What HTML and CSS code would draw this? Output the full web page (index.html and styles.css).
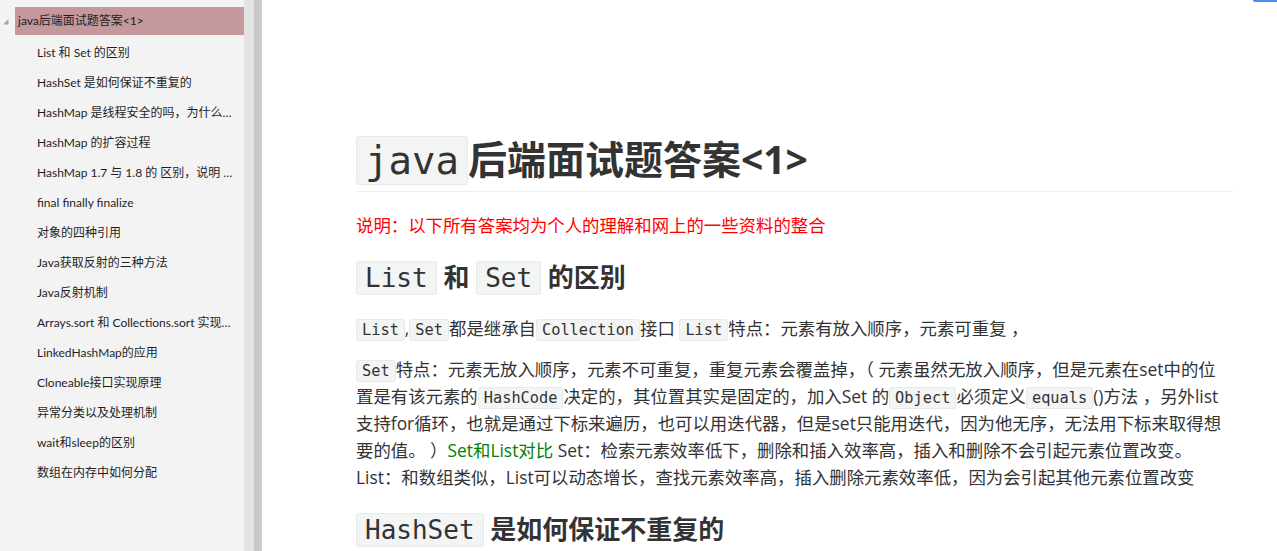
FILE: index.html
```html
<!DOCTYPE html>
<html lang="zh-CN">
<head>
    <meta charset="UTF-8">
    <meta name="viewport" content="width=device-width, initial-scale=1.0">
    <title>java后端面试题答案&lt;1&gt;</title>
    <link rel="stylesheet" href="styles.css">
</head>
<body>
    <div class="sidebar">
        <div class="toc-top">
            <svg class="toc-arrow" width="6" height="6" viewBox="0 0 6 6"><polygon points="5.5,0 5.5,5.5 0,5.5" fill="#a8a8a8"/></svg>
            <div class="toc-current">java后端面试题答案&lt;1&gt;</div>
        </div>
        <ul class="toc-list">
            <li>List 和 Set 的区别</li>
            <li>HashSet 是如何保证不重复的</li>
            <li>HashMap 是线程安全的吗，为什么不是线程安全的</li>
            <li>HashMap 的扩容过程</li>
            <li>HashMap 1.7 与 1.8 的 区别，说明 1.8 做了哪些优化</li>
            <li>final finally finalize</li>
            <li>对象的四种引用</li>
            <li>Java获取反射的三种方法</li>
            <li>Java反射机制</li>
            <li>Arrays.sort 和 Collections.sort 实现原理和区别</li>
            <li>LinkedHashMap的应用</li>
            <li>Cloneable接口实现原理</li>
            <li>异常分类以及处理机制</li>
            <li>wait和sleep的区别</li>
            <li>数组在内存中如何分配</li>
        </ul>
    </div>
    <div class="splitter"></div>
    <div class="content">
        <div class="write">
            <h1><code>java</code>后端面试题答案&lt;1&gt;</h1>
            <p class="note">说明：以下所有答案均为个人的理解和网上的一些资料的整合</p>
            <h2><code>List</code> 和 <code>Set</code> 的区别</h2>
            <p><code>List</code>,<code>Set</code>都是继承自<code>Collection</code>接口 <code>List</code>特点：元素有放入顺序，元素可重复 ，</p>
            <p><code>Set</code>特点：元素无放入顺序，元素不可重复，重复元素会覆盖掉，（ 元素虽然无放入顺序，但是元素在set中的位置是有该元素的<code>HashCode</code>决定的，其位置其实是固定的，加入Set 的<code>Object</code>必须定义<code>equals</code>()方法 ，另外list支持for循环，也就是通过下标来遍历，也可以用迭代器，但是set只能用迭代，因为他无序，无法用下标来取得想要的值。 ）<span class="green">Set和List对比</span> Set：检索元素效率低下，删除和插入效率高，插入和删除不会引起元素位置改变。<br>List：和数组类似，List可以动态增长，查找元素效率高，插入删除元素效率低，因为会引起其他元素位置改变</p>
            <h2><code>HashSet</code> 是如何保证不重复的</h2>
        </div>
    </div>
    <div class="topbar"></div>
</body>
</html>
```

FILE: styles.css
```css
*{
    margin: 0;
    padding: 0;
    box-sizing: border-box;
}
body{
    display: flex;
    height: 551px;
    overflow: hidden;
    background: #fff;
    color: #333;
    font-family: "Open Sans", "Noto Sans CJK SC", sans-serif;
}
/* 左侧大纲 */
.sidebar{
    width: 244px;
    flex-shrink: 0;
    background: #f3f3f3;
    padding-top: 7px;
    font-family: Lato, "Noto Sans CJK SC", sans-serif;
    font-size: 12px;
    color: #1e1e1e;
}
.toc-top{
    display: flex;
    align-items: center;
    margin-bottom: 3px;
}
.toc-arrow{
    margin: 2px 6px 0 3px;
}
.toc-current{
    flex: 1;
    height: 28px;
    line-height: 28px;
    padding-left: 3px;
    background: #c4989c;
}
.toc-list{
    list-style: none;
}
.toc-list li{
    height: 30px;
    line-height: 30px;
    padding: 0 8px 0 37px;
    white-space: nowrap;
    overflow: hidden;
    text-overflow: ellipsis;
}
.splitter{
    width: 18px;
    flex-shrink: 0;
    background: linear-gradient(to right, #e3e3e3 0, #e3e3e3 10px, #c6c6c6 10px, #cfcfcf 18px);
}
/* 正文 */
.content{
    flex: 1;
    padding: 135px 44px 0 94px;
}
.write{
    font-size: 17.4px;
    line-height: 27px;
}
.write code{
    font-family: "DejaVu Sans Mono", "Liberation Mono", monospace;
    font-size: 0.88em;
    line-height: 1;
    background: #f3f4f4;
    border: 1px solid #e7eaed;
    border-radius: 3px;
    padding: 1px 5px;
}
.write h1{
    font-size: 39px;
    line-height: 47px;
    padding-bottom: 9px;
    border-bottom: 1px solid #eee;
}
.write h2{
    font-size: 26px;
    line-height: 36px;
    margin-top: 20px;
}
.write h1 code,
.write h2 code{
    font-size: 1em;
    font-weight: normal;
    padding: 1px 8px;
}
.write p{
    margin-top: 14px;
    padding-right: 2px;
}
.write .note{
    color: #f00;
    margin-top: 20px;
}
.write h2 + p{
    margin-top: 20px;
}
.green{
    color: #008000;
}
.topbar{
    position: absolute;
    top: 0;
    right: 0;
    width: 24px;
    height: 2px;
    background: #4a8af4;
    border-bottom-left-radius: 2px;
}
```
